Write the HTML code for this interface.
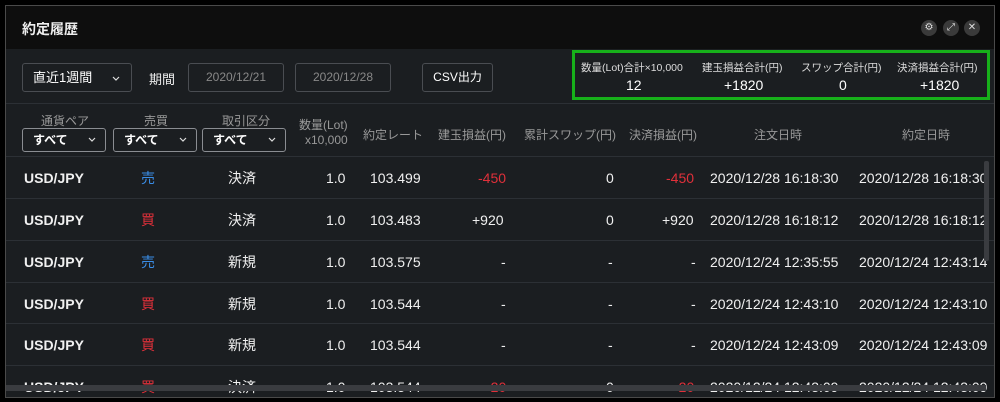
<!DOCTYPE html>
<html><head><meta charset="utf-8"><style>
*{margin:0;padding:0;box-sizing:border-box}
body{width:1000px;height:402px;background:#000;font-family:"Liberation Sans","Noto Sans CJK JP",sans-serif;color:#e8e8e8;overflow:hidden;position:relative}
.panel{position:absolute;left:5px;top:5px;width:990px;height:393px;border:1px solid #4a4a4a;background:#1b1e21;overflow:hidden}
.title{position:absolute;left:0;top:0;width:100%;height:43px;background:#0e0e0e}
.title span{position:absolute;left:16px;top:13px;font-size:14px;font-weight:bold;color:#eee}
.ic{position:absolute;top:14px;width:16px;height:16px;border-radius:50%;background:#3a3a3a;color:#ddd;font-size:10px;line-height:16px;text-align:center}
.box{position:absolute;border:1px solid #4a4d52;border-radius:3px;height:29px;font-size:13px;line-height:27px}
.abs{position:absolute;white-space:nowrap}
.sum{position:absolute;left:566px;top:44px;width:418px;height:50px;border:3px solid #17b01a}
.sum .l{font-size:10.5px;color:#ddd}
.sum .v{font-size:14px;color:#fff}
.hdr{font-size:12px;color:#999}
.sel{position:absolute;top:122px;height:24px;border:1px solid #8a8d92;border-radius:3px;font-size:12px;font-weight:bold;color:#fff;line-height:22px;padding-left:10px}
.chev{position:absolute;right:9px;top:8px}
.sep{position:absolute;left:0;width:100%;height:1px;background:#2c3035}
.row{position:absolute;left:0;width:100%;height:42px;font-size:14px;color:#f0f0f0}
.row div{position:absolute;top:13px;white-space:nowrap}
.red{color:#e0303a}.blue{color:#3a8ee8}
</style></head><body>
<div class="panel">
<div class="title"><span>約定履歴</span>
<div class="ic" style="left:915px">⚙</div><div class="ic" style="left:937px">⤢</div><div class="ic" style="left:958px">✕</div></div>

<div class="box" style="left:16px;top:57px;width:110px;padding-left:10px;color:#fff">直近1週間<svg style="position:absolute;right:11px;top:12px" width="8" height="5"><path d="M1 1L4 4L7 1" stroke="#ddd" fill="none" stroke-width="1.2"/></svg></div>
<div class="abs" style="left:143px;top:63px;font-size:13px;color:#eee">期間</div>
<div class="box" style="left:182px;top:57px;width:96px;text-align:center;color:#888;font-size:12px">2020/12/21</div>
<div class="box" style="left:289px;top:57px;width:96px;text-align:center;color:#888;font-size:12px">2020/12/28</div>
<div class="box" style="left:416px;top:57px;width:71px;text-align:center;color:#fff;font-size:12px">CSV出力</div>

<div class="sum">
<div class="abs l" style="left:6px;top:7px">数量(Lot)合計×10,000</div>
<div class="abs v" style="left:51px;top:24px">12</div>
<div class="abs l" style="left:127px;top:7px">建玉損益合計(円)</div>
<div class="abs v" style="left:149px;top:24px">+1820</div>
<div class="abs l" style="left:226px;top:7px">スワップ合計(円)</div>
<div class="abs v" style="left:264px;top:24px">0</div>
<div class="abs l" style="left:322px;top:7px">決済損益合計(円)</div>
<div class="abs v" style="left:345px;top:24px">+1820</div>
</div>

<div class="sep" style="top:97px"></div>
<div class="abs hdr" style="left:35px;top:106px">通貨ペア</div>
<div class="abs hdr" style="left:138px;top:106px">売買</div>
<div class="abs hdr" style="left:216px;top:106px">取引区分</div>
<div class="sel" style="left:16px;width:84px">すべて<svg class="chev" width="8" height="5"><path d="M1 1L4 4L7 1" stroke="#ddd" fill="none" stroke-width="1.2"/></svg></div>
<div class="sel" style="left:107px;width:84px">すべて<svg class="chev" width="8" height="5"><path d="M1 1L4 4L7 1" stroke="#ddd" fill="none" stroke-width="1.2"/></svg></div>
<div class="sel" style="left:196px;width:84px">すべて<svg class="chev" width="8" height="5"><path d="M1 1L4 4L7 1" stroke="#ddd" fill="none" stroke-width="1.2"/></svg></div>
<div class="abs hdr" style="left:293px;top:112px;text-align:right;line-height:15px">数量(Lot)<br>&nbsp;x10,000</div>
<div class="abs hdr" style="left:357px;top:120px">約定レート</div>
<div class="abs hdr" style="left:432px;top:120px">建玉損益(円)</div>
<div class="abs hdr" style="left:518px;top:120px">累計スワップ(円)</div>
<div class="abs hdr" style="left:623px;top:120px">決済損益(円)</div>
<div class="abs hdr" style="left:748px;top:120px">注文日時</div>
<div class="abs hdr" style="left:896px;top:120px">約定日時</div>
<div class="sep" style="top:150px"></div>

<div class="row" style="top:151px"><div style="left:18px;font-weight:bold">USD/JPY</div><div class="blue" style="left:135px;top:11px">売</div><div style="left:222px;top:11px">決済</div><div style="left:320px">1.0</div><div style="left:364px">103.499</div><div class="red" style="left:472px">-450</div><div style="left:600px">0</div><div class="red" style="left:660px">-450</div><div style="left:704px">2020/12/28 16:18:30</div><div style="left:853px">2020/12/28 16:18:30</div></div>
<div class="sep" style="top:192px"></div>
<div class="row" style="top:193px"><div style="left:18px;font-weight:bold">USD/JPY</div><div class="red" style="left:135px;top:11px">買</div><div style="left:222px;top:11px">決済</div><div style="left:320px">1.0</div><div style="left:364px">103.483</div><div style="left:466px">+920</div><div style="left:600px">0</div><div style="left:656px">+920</div><div style="left:704px">2020/12/28 16:18:12</div><div style="left:853px">2020/12/28 16:18:12</div></div>
<div class="sep" style="top:234px"></div>
<div class="row" style="top:235px"><div style="left:18px;font-weight:bold">USD/JPY</div><div class="blue" style="left:135px;top:11px">売</div><div style="left:222px;top:11px">新規</div><div style="left:320px">1.0</div><div style="left:364px">103.575</div><div style="left:495px">-</div><div style="left:602px">-</div><div style="left:685px">-</div><div style="left:704px">2020/12/24 12:35:55</div><div style="left:853px">2020/12/24 12:43:14</div></div>
<div class="sep" style="top:276px"></div>
<div class="row" style="top:277px"><div style="left:18px;font-weight:bold">USD/JPY</div><div class="red" style="left:135px;top:11px">買</div><div style="left:222px;top:11px">新規</div><div style="left:320px">1.0</div><div style="left:364px">103.544</div><div style="left:495px">-</div><div style="left:602px">-</div><div style="left:685px">-</div><div style="left:704px">2020/12/24 12:43:10</div><div style="left:853px">2020/12/24 12:43:10</div></div>
<div class="sep" style="top:317px"></div>
<div class="row" style="top:318px"><div style="left:18px;font-weight:bold">USD/JPY</div><div class="red" style="left:135px;top:11px">買</div><div style="left:222px;top:11px">新規</div><div style="left:320px">1.0</div><div style="left:364px">103.544</div><div style="left:495px">-</div><div style="left:602px">-</div><div style="left:685px">-</div><div style="left:704px">2020/12/24 12:43:09</div><div style="left:853px">2020/12/24 12:43:09</div></div>
<div class="sep" style="top:359px"></div>
<div class="row" style="top:360px"><div style="left:18px;font-weight:bold">USD/JPY</div><div class="red" style="left:135px;top:11px">買</div><div style="left:222px;top:11px">決済</div><div style="left:320px">1.0</div><div style="left:364px">103.544</div><div class="red" style="left:480px">-20</div><div style="left:600px">0</div><div class="red" style="left:668px">-20</div><div style="left:704px">2020/12/24 12:43:09</div><div style="left:853px">2020/12/24 12:43:09</div></div>
<div style="position:absolute;left:0;top:379px;width:980px;height:6px;background:#3a3c40"></div>
<div style="position:absolute;left:978px;top:155px;width:5px;height:100px;background:#3a3c40;border-radius:2px"></div>
</div>
</body></html>
